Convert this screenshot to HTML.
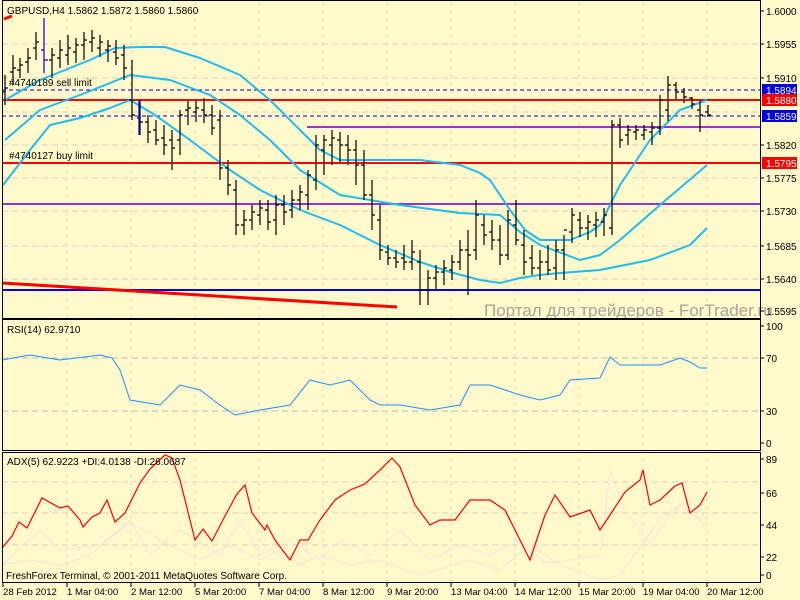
<!DOCTYPE html>
<html><head><meta charset="utf-8"><style>
html,body{margin:0;padding:0;background:#fff;}
svg{display:block;font-family:"Liberation Sans","DejaVu Sans",sans-serif;}
</style></head><body>
<svg width="800" height="600" viewBox="0 0 800 600" xmlns="http://www.w3.org/2000/svg">
<rect width="800" height="600" fill="#FFF9CC"/>
<g stroke="#D8D4BC" stroke-dasharray="6,4" stroke-width="1">
<line x1="2" y1="44" x2="760" y2="44"/><line x1="2" y1="78" x2="760" y2="78"/><line x1="2" y1="112" x2="760" y2="112"/><line x1="2" y1="145" x2="760" y2="145"/><line x1="2" y1="178" x2="760" y2="178"/><line x1="2" y1="211" x2="760" y2="211"/><line x1="2" y1="246" x2="760" y2="246"/><line x1="2" y1="279" x2="760" y2="279"/>
<line x1="2" y1="358" x2="760" y2="358" stroke="#BBB"/><line x1="2" y1="411" x2="760" y2="411" stroke="#BBB"/>
<line x1="2" y1="482" x2="760" y2="482"/><line x1="2" y1="513" x2="760" y2="513"/><line x1="2" y1="545" x2="760" y2="545"/>
</g>
<g stroke="#E6E0C4" stroke-dasharray="4,4">
<line x1="67" y1="2" x2="67" y2="582"/><line x1="131" y1="2" x2="131" y2="582"/><line x1="195" y1="2" x2="195" y2="582"/><line x1="259" y1="2" x2="259" y2="582"/><line x1="323" y1="2" x2="323" y2="582"/><line x1="387" y1="2" x2="387" y2="582"/><line x1="451" y1="2" x2="451" y2="582"/><line x1="515" y1="2" x2="515" y2="582"/><line x1="579" y1="2" x2="579" y2="582"/><line x1="643" y1="2" x2="643" y2="582"/><line x1="707" y1="2" x2="707" y2="582"/>
</g>
<line x1="2" y1="90" x2="760" y2="90" stroke="#0000E0" stroke-dasharray="4,3"/>
<line x1="2" y1="116" x2="760" y2="116" stroke="#0000E0" stroke-dasharray="4,3"/>
<line x1="2" y1="100" x2="760" y2="100" stroke="#FF0000" stroke-width="2"/>
<line x1="2" y1="163" x2="760" y2="163" stroke="#FF0000" stroke-width="2"/>
<line x1="307" y1="127" x2="760" y2="127" stroke="#9933CC" stroke-width="2"/>
<line x1="2" y1="204" x2="760" y2="204" stroke="#9933CC" stroke-width="2"/>
<line x1="2" y1="290" x2="760" y2="290" stroke="#0000E0" stroke-width="2"/>
<line x1="2" y1="283" x2="397" y2="307" stroke="#FF0000" stroke-width="3"/>
<g fill="none" stroke="#22BBEE" stroke-width="2" stroke-linejoin="round">
<polyline points="5,100 40,80 90,60 115,48 140,47 165,47 200,58 240,75 270,100 300,130 320,150 340,160 380,160 420,160 460,165 480,173 490,180 510,210 525,230 540,240 570,240 590,232 600,225 620,185 650,140 680,110 707,100"/>
<polyline points="5,140 40,110 80,95 130,75 170,80 210,95 240,115 270,140 300,170 340,195 400,205 460,213 500,215 520,232 540,245 580,260 600,255 620,240 660,205 707,165"/>
<polyline points="3,185 30,150 50,125 80,118 110,108 130,100 155,115 190,140 230,170 260,190 300,210 340,225 380,245 420,262 450,272 480,280 500,283 520,278 540,275 560,273 600,270 650,260 690,245 707,228"/>
</g>
<path fill="none" stroke="#000" stroke-width="1.2" d="
M5,75v30M2,92h3M5,88h3
M13,55v30M10,72h3M13,68h3
M20,58v20M17,70h3M20,65h3
M28,48v25M25,62h3M28,58h3
M36,32v28M33,48h3M36,42h3
M52,48v30M49,60h3M52,55h3
M60,40v28M57,58h3M60,50h3
M68,35v30M65,55h3M68,48h3
M76,38v25M73,52h3M76,45h3
M84,32v28M81,45h3M84,40h3
M92,30v22M89,42h3M92,38h3
M100,35v22M97,48h3M100,42h3
M108,40v22M105,50h3M108,46h3
M116,40v25M113,52h3M116,58h3
M124,45v35M121,55h3M124,68h3
M132,60v60M129,100h3M132,115h3
M140,100v35M137,118h3M140,122h3
M148,115v28M145,122h3M148,132h3
M156,120v25M153,130h3M156,140h3
M164,125v30M161,138h3M164,145h3
M172,130v40M169,140h3M172,148h3
M180,110v45M177,140h3M180,115h3
M188,100v25M185,110h3M188,108h3
M196,100v22M193,112h3M196,108h3
M204,98v25M201,110h3M204,115h3
M212,105v30M209,115h3M212,128h3
M220,110v70M217,120h3M220,168h3
M228,160v35M225,168h3M228,185h3
M236,180v55M233,190h3M236,225h3
M244,210v25M241,225h3M244,220h3
M252,205v25M249,220h3M252,212h3
M260,200v25M257,215h3M260,208h3
M268,200v30M265,210h3M268,222h3
M276,195v40M273,220h3M276,205h3
M284,195v30M281,205h3M284,212h3
M292,190v28M289,210h3M292,200h3
M300,185v25M297,200h3M300,192h3
M308,170v40M305,195h3M308,175h3
M316,135v55M313,180h3M316,145h3
M324,135v40M321,150h3M324,140h3
M332,130v35M329,145h3M332,138h3
M340,132v30M337,140h3M340,145h3
M348,135v30M345,145h3M348,150h3
M356,140v45M353,150h3M356,165h3
M364,150v50M361,165h3M364,195h3
M372,180v50M369,195h3M372,215h3
M380,205v55M377,220h3M380,250h3
M388,245v20M385,252h3M388,258h3
M396,250v18M393,258h3M396,262h3
M404,245v25M401,258h3M404,262h3
M412,240v30M409,262h3M412,252h3
M420,250v55M417,262h3M420,290h3
M428,270v35M425,290h3M428,278h3
M436,265v25M433,278h3M436,272h3
M444,260v25M441,272h3M444,268h3
M452,255v25M449,270h3M452,262h3
M460,240v30M457,262h3M460,250h3
M468,230v65M465,250h3M468,255h3
M476,200v60M473,250h3M476,215h3
M484,215v30M481,225h3M484,235h3
M492,220v30M489,232h3M492,240h3
M500,225v40M497,240h3M500,255h3
M508,210v50M505,255h3M508,220h3
M516,200v45M513,225h3M516,240h3
M524,230v45M521,245h3M524,262h3
M532,245v30M529,258h3M532,268h3
M540,250v30M537,268h3M540,262h3
M548,245v30M545,262h3M548,270h3
M556,240v40M553,268h3M556,250h3
M564,235v45M561,250h3M564,230h3
M572,208v35M569,232h3M572,215h3
M580,212v25M577,220h3M580,228h3
M588,215v25M585,228h3M588,222h3
M596,212v25M593,225h3M596,220h3
M604,208v28M601,222h3M604,215h3
M612,120v115M609,228h3M612,125h3
M620,118v30M617,125h3M620,140h3
M628,125v20M625,135h3M628,130h3
M636,125v15M633,132h3M636,130h3
M644,125v15M641,135h3M644,130h3
M652,122v23M649,132h3M652,128h3
M660,95v40M657,128h3M660,100h3
M668,76v45M665,110h3M668,85h3
M676,82v18M673,85h3M676,92h3
M684,88v15M681,92h3M684,97h3
M692,97v12M689,98h3M692,104h3
M700,100v32M697,110h3M700,115h3
M708,105v12M705,112h3M708,115h3"/>
<path d="M44,18v55M41,50h3M44,60h4M139,100v35" stroke="#0000E0" stroke-width="1.2" fill="none"/>
<path d="M4,19l8,-3" stroke="#FF0000" stroke-width="3"/>
<g font-size="10" fill="#000">
<text x="7" y="14">GBPUSD,H4  1.5862 1.5872 1.5860 1.5860</text>
<text x="9" y="86">#4740189 sell limit</text>
<text x="9" y="159">#4740127 buy limit</text>
</g>
<text x="484" y="316" font-size="17" fill="#A8A49C">Портал для трейдеров - ForTrader.ru</text>
<polyline fill="none" stroke="#1E90FF" stroke-width="1" points="2,360 30,355 60,360 100,355 112,358 120,370 130,400 160,405 180,385 200,390 220,405 235,415 260,410 290,405 310,380 330,385 350,380 370,400 380,405 400,405 430,410 460,405 470,385 490,385 520,395 540,400 560,395 570,380 600,378 610,357 620,365 660,365 680,358 690,362 700,368 707,368"/>
<text x="7" y="333" font-size="10">RSI(14) 62.9710</text>
<polyline fill="none" stroke="#F2E6D6" stroke-width="1" points="2,565 40,530 60,550 100,545 130,520 150,555 180,530 220,555 240,520 260,555 290,540 320,560 340,540 370,555 400,530 430,560 460,545 490,555 520,540 545,563 570,560 600,555 610,470 625,510 650,545 670,515 690,500 707,520"/>
<polyline fill="none" stroke="#F8E0D0" stroke-width="1" points="2,565 30,560 60,565 90,555 130,522 160,540 200,560 230,545 260,560 280,550 300,565 320,555 350,565 380,560 420,575 470,560 500,570 530,545 560,565 600,580 620,575 660,520 680,505 700,520 707,530"/>
<polyline fill="none" stroke="#FF0000" stroke-width="1.2" points="2,548 12,536 19,522 27,528 42,498 60,508 68,506 80,520 83,527 92,517 100,513 107,500 115,522 125,513 140,483 150,469 165,455 172,458 180,480 195,540 203,529 212,541 225,516 237,494 245,485 252,513 265,530 267,525 275,540 290,560 300,540 308,540 320,520 335,500 350,490 365,484 380,470 392,458 400,467 415,505 430,525 440,520 455,520 470,500 490,500 505,510 520,540 530,560 545,515 555,495 570,517 590,510 600,530 610,515 625,492 640,480 643,470 650,505 660,500 675,486 682,483 690,513 700,505 707,492"/>
<text x="7" y="465" font-size="10">ADX(5) 62.9223 +DI:4.0138 -DI:26.0687</text>
<text x="6" y="579" font-size="10">FreshForex Terminal, © 2001-2011 MetaQuotes Software Corp.</text>
<g fill="none" stroke="#000" stroke-width="1">
<rect x="2.5" y="0.5" width="758" height="318"/>
<rect x="2.5" y="319.5" width="758" height="131"/>
<rect x="2.5" y="452.5" width="758" height="130"/>
</g>
<path stroke="#000" d="M760,11h4M760,44h4M760,78h4M760,145h4M760,178h4M760,211h4M760,246h4M760,279h4M760,311h4M760,326h4M760,358h4M760,411h4M760,443h4M760,459h4M760,493h4M760,525h4M760,557h4M760,575h4M3,582v5M67,582v5M131,582v5M195,582v5M259,582v5M323,582v5M387,582v5M451,582v5M515,582v5M579,582v5M643,582v5M707,582v5"/>
<g font-size="10" fill="#000">
<text x="766" y="15">1.6000</text><text x="766" y="48">1.5955</text><text x="766" y="82">1.5910</text><text x="766" y="149">1.5820</text><text x="766" y="182">1.5775</text><text x="766" y="215">1.5730</text><text x="766" y="250">1.5685</text><text x="766" y="283">1.5640</text><text x="766" y="315">1.5595</text>
<text x="766" y="330">100</text><text x="766" y="362">70</text><text x="766" y="415">30</text><text x="766" y="447">0</text>
<text x="766" y="463">89</text><text x="766" y="497">66</text><text x="766" y="529">44</text><text x="766" y="561">22</text><text x="766" y="579">0</text>
</g>
<rect x="762" y="84" width="35" height="13" fill="#0000E0"/><text x="766" y="94" font-size="10" fill="#fff">1.5894</text>
<rect x="762" y="94" width="35" height="12" fill="#FF0000"/><text x="766" y="104" font-size="10" fill="#fff">1.5880</text>
<rect x="762" y="110" width="35" height="12" fill="#0000E0"/><text x="766" y="120" font-size="10" fill="#fff">1.5859</text>
<rect x="762" y="157" width="35" height="12" fill="#FF0000"/><text x="766" y="167" font-size="10" fill="#fff">1.5795</text>
<g font-size="9.6" fill="#000">
<text x="3" y="595">28 Feb 2012</text><text x="67" y="595">1 Mar 04:00</text><text x="131" y="595">2 Mar 12:00</text><text x="195" y="595">5 Mar 20:00</text><text x="259" y="595">7 Mar 04:00</text><text x="323" y="595">8 Mar 12:00</text><text x="387" y="595">9 Mar 20:00</text><text x="451" y="595">13 Mar 04:00</text><text x="515" y="595">14 Mar 12:00</text><text x="579" y="595">15 Mar 20:00</text><text x="643" y="595">19 Mar 04:00</text><text x="707" y="595">20 Mar 12:00</text>
</g>
</svg>
</body></html>
